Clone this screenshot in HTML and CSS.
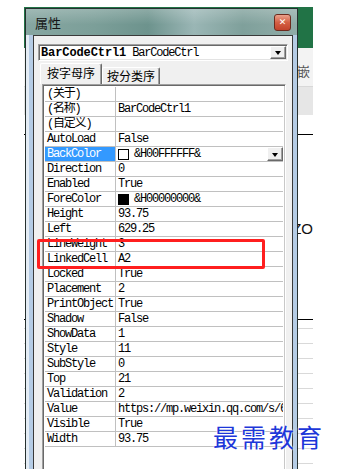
FILE: index.html
```html
<!DOCTYPE html>
<html lang="zh-CN">
<head>
  <meta charset="UTF-8">
  <meta name="viewport" content="width=device-width, initial-scale=1.0">
  <title>属性</title>
  <link rel="stylesheet" href="styles.css">
</head>
<body>
  <!-- Excel sheet behind the dialog -->
  <div class="sheet">
    <div class="ribbon-top"></div>
    <div class="ribbon"><span>嵌</span></div>
    <div class="ribbon-bar"></div>
    <div class="sheet-body">
      <div class="shape-line"></div>
      <div class="shape-text">ZO</div>
      <div class="shape-line"></div>
      <div class="cells"></div>
    </div>
  </div>

  <!-- Properties window -->
  <div class="win">
    <div class="titlebar">
      <span class="title">属性</span>
      <span class="close">&#x2715;</span>
    </div>
    <div class="frame">
      <div class="panel">
        <div class="combo">
          <span class="combo-text"><b>BarCodeCtrl1</b> BarCodeCtrl</span>
          <span class="btn"><i class="arrow"></i></span>
        </div>
        <div class="tabs">
          <span class="tab active">按字母序</span>
          <span class="tab">按分类序</span>
        </div>
        <div class="grid">
          <div class="row"><span class="name">(关于)</span><span class="val"></span></div>
          <div class="row"><span class="name">(名称)</span><span class="val">BarCodeCtrl1</span></div>
          <div class="row"><span class="name">(自定义)</span><span class="val"></span></div>
          <div class="row"><span class="name">AutoLoad</span><span class="val">False</span></div>
          <div class="row"><span class="name selected">BackColor</span><span class="val"><i class="swatch"></i>&amp;H00FFFFFF&amp;<span class="btn cell-btn"><i class="arrow"></i></span></span></div>
          <div class="row"><span class="name">Direction</span><span class="val">0</span></div>
          <div class="row"><span class="name">Enabled</span><span class="val">True</span></div>
          <div class="row"><span class="name">ForeColor</span><span class="val"><i class="swatch black"></i>&amp;H00000000&amp;</span></div>
          <div class="row"><span class="name">Height</span><span class="val">93.75</span></div>
          <div class="row"><span class="name">Left</span><span class="val">629.25</span></div>
          <div class="row"><span class="name">LineWeight</span><span class="val">3</span></div>
          <div class="row"><span class="name">LinkedCell</span><span class="val">A2</span></div>
          <div class="row"><span class="name">Locked</span><span class="val">True</span></div>
          <div class="row"><span class="name">Placement</span><span class="val">2</span></div>
          <div class="row"><span class="name">PrintObject</span><span class="val">True</span></div>
          <div class="row"><span class="name">Shadow</span><span class="val">False</span></div>
          <div class="row"><span class="name">ShowData</span><span class="val">1</span></div>
          <div class="row"><span class="name">Style</span><span class="val">11</span></div>
          <div class="row"><span class="name">SubStyle</span><span class="val">0</span></div>
          <div class="row"><span class="name">Top</span><span class="val">21</span></div>
          <div class="row"><span class="name">Validation</span><span class="val">2</span></div>
          <div class="row"><span class="name">Value</span><span class="val">https://mp.weixin.qq.com/s/6</span></div>
          <div class="row"><span class="name">Visible</span><span class="val">True</span></div>
          <div class="row"><span class="name">Width</span><span class="val">93.75</span></div>
        </div>
      </div>
    </div>
  </div>

  <div class="mark-box"></div>
  <div class="watermark">最需教育</div>
</body>
</html>
```

FILE: styles.css
```css
body {
  margin: 0;
  width: 337px;
  height: 469px;
  overflow: hidden;
  position: relative;
  background: #fff;
  font-family: "Liberation Mono", "Noto Sans CJK SC", monospace;
}

/* sheet in the background */
.sheet {
  margin: 7px 0 0 24px;
  width: 289px;
  height: 462px;
  overflow: hidden;
  background: #fff;
}

.ribbon-top {
  height: 41px;
  background: #217346;
}

.ribbon {
  height: 38px;
  box-sizing: border-box;
  padding: 15px 3px 0 0;
  display: flex;
  justify-content: flex-end;
  background: #f3f3f3;
  color: #555;
  font: 13px/16px "Noto Sans CJK SC", sans-serif;
}

.ribbon-bar {
  height: 29px;
  box-sizing: border-box;
  border-top: 1px solid #d8d8d8;
  background: #e6e6e6;
}

.sheet-body {
  padding-top: 19px;
}

.shape-line {
  height: 1px;
  background: #000;
}

.shape-text {
  height: 184px;
  box-sizing: border-box;
  padding-top: 86px;
  text-align: right;
  color: #111;
  font: 15px/16px "Liberation Sans", sans-serif;
}

.cells {
  height: 150px;
  background: repeating-linear-gradient(to bottom, transparent 0 8px, #d9d9d9 8px 9px, transparent 9px 15px);
}

/* properties window */
.win {
  position: absolute;
  left: 25px;
  top: 8px;
  width: 273px;
  height: 480px;
  box-sizing: border-box;
  border: 1px solid #26302f;
  display: flex;
  flex-direction: column;
}

.titlebar {
  height: 26px;
  flex: none;
  display: flex;
  align-items: center;
  padding: 0 6px 0 9px;
  background:
    linear-gradient(to bottom, rgba(255, 255, 255, 0.22), rgba(255, 255, 255, 0) 60%),
    linear-gradient(to right, #86a6a1, #7c9f99 25%, #6d938d 45%, #9ab6b5 62%, #7fa09b 80%, #90aca8);
}

.title {
  font: 13px "Noto Sans CJK SC", sans-serif;
  color: #151515;
}

.close {
  margin-left: auto;
  width: 17px;
  height: 17px;
  box-sizing: border-box;
  border: 1px solid #6d2b1e;
  border-radius: 3px;
  background: linear-gradient(to bottom, #eba28c, #d45f43 50%, #c2432b);
  color: #fff;
  font: bold 9px "DejaVu Sans", sans-serif;
  display: flex;
  align-items: center;
  justify-content: center;
}

.frame {
  flex: 1;
  padding: 0 4px 0 7px;
  background: linear-gradient(to right, #e4ecf4 0 3px, #b5cce5 3px);
}

.panel {
  width: 260px;
  height: 100%;
  box-sizing: border-box;
  border: 1px solid #3a3a3a;
  border-bottom: none;
  padding: 8px 4px 0 4px;
  background: #f0f0f0;
}

.combo {
  height: 17px;
  box-sizing: border-box;
  border: 1px solid;
  border-color: #a0a0a0 #fff #fff #a0a0a0;
  box-shadow: inset 1px 1px 0 #696969, inset -1px -1px 0 #e3e3e3;
  background: #fff;
  display: flex;
  align-items: center;
  padding: 1px 1px 1px 2px;
  font-size: 12px;
  letter-spacing: -1.2px;
}

.combo b {
  letter-spacing: -0.1px;
}

.combo-text {
  white-space: nowrap;
  line-height: 14px;
}

.btn {
  margin-left: auto;
  width: 16px;
  height: 13px;
  flex: none;
  box-sizing: border-box;
  border: 1px solid;
  border-color: #fff #696969 #696969 #fff;
  box-shadow: inset -1px -1px 0 #a0a0a0;
  background: #f0f0f0;
  display: flex;
  align-items: center;
  justify-content: center;
}

.arrow {
  width: 0;
  height: 0;
  border-left: 3px solid transparent;
  border-right: 3px solid transparent;
  border-top: 4px solid #000;
  margin-top: 1px;
}

.tabs {
  height: 21px;
  margin-top: 2px;
  padding-left: 2px;
  display: flex;
  align-items: flex-end;
  font: 12px "Noto Sans CJK SC", sans-serif;
}

.tab {
  width: 58px;
  height: 17px;
  box-sizing: border-box;
  border: 1px solid;
  border-bottom: none;
  border-color: #fff #696969 #fff #fff;
  border-radius: 2px 2px 0 0;
  box-shadow: inset -1px 0 0 #a0a0a0;
  display: flex;
  align-items: center;
  justify-content: center;
  line-height: 14px;
}

.tab.active {
  width: 62px;
  height: 21px;
  padding-bottom: 3px;
}

.grid {
  margin-left: 4px;
  width: 244px;
  height: 400px;
  box-sizing: border-box;
  border: 1px solid;
  border-color: #a0a0a0 #fff #fff #a0a0a0;
  box-shadow: inset 1px 1px 0 #696969, inset -1px 0 0 #c8c8c8;
  padding: 2px 2px 0 2px;
  background: #fff;
  font-size: 12px;
  letter-spacing: -1.2px;
  color: #000;
}

.row {
  display: flex;
  height: 15px;
  box-sizing: border-box;
  border-bottom: 1px solid #c0c0c0;
  line-height: 14px;
}

.name {
  width: 71px;
  flex: none;
  box-sizing: border-box;
  border-right: 1px solid #c0c0c0;
  padding-left: 2px;
  white-space: nowrap;
  overflow: hidden;
}

.name.selected {
  background: #3399ff;
  color: #fff;
}

.val {
  flex: 1;
  min-width: 0;
  padding-left: 2px;
  white-space: nowrap;
  overflow: hidden;
  display: flex;
  align-items: center;
}

.swatch {
  width: 11px;
  height: 11px;
  flex: none;
  box-sizing: border-box;
  border: 1px solid #000;
  background: #fff;
  margin-right: 5px;
}

.swatch.black {
  background: #000;
}

.cell-btn {
  height: 14px;
  letter-spacing: 0;
}

/* annotation and watermark on top */
.mark-box {
  position: absolute;
  left: 37px;
  top: 239px;
  width: 228px;
  height: 30px;
  box-sizing: border-box;
  border: 3px solid #ff1f1f;
  border-radius: 2px;
}

.watermark {
  position: absolute;
  left: 213px;
  top: 421px;
  font: 25px/30px "Noto Sans CJK SC", sans-serif;
  letter-spacing: 3px;
  color: #1d37d9;
  text-shadow: 0 0 2px #fff, 0 0 2px #fff;
}
```
